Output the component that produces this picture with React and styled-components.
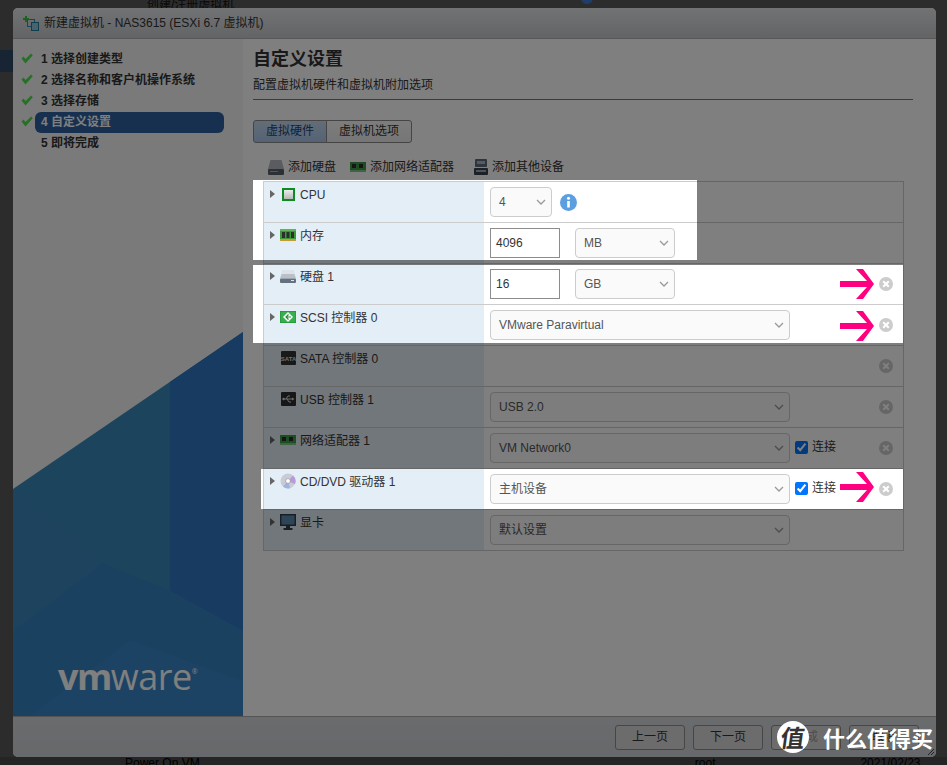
import React from "react";
import styled, { createGlobalStyle } from "styled-components";

const GlobalStyle = createGlobalStyle`
  html, body { margin: 0; padding: 0; background: #585858; overflow: hidden; }
  body { font: 12px/14px "Liberation Sans", "Noto Sans CJK SC", sans-serif; color: #333; }
`;

const Page = styled.div`
  position: relative;
  width: 947px;
  height: 765px;
  overflow: hidden;
  background: #585858;
  display: flex;
  flex-direction: column;
`;

const BackTop = styled.div`
  height: 8px;
  padding-left: 147px;
  display: flex;
  align-items: flex-end;
  gap: 4px;
  line-height: 6px;
  overflow: hidden;
  color: #111;
`;

const BackDot = styled.div`
  width: 12px;
  height: 12px;
  margin: 0 0 4px 343px;
  border-radius: 50%;
  background: #3f7fd0;
  flex: none;
`;

const BackNav = styled.div`
  width: 13px;
  height: 22px;
  margin-top: 42px;
  background: #2c4868;
`;

const BackBottom = styled.div`
  margin-top: auto;
  height: 8px;
  overflow: hidden;
  display: flex;
  background: #4a4a4a;
  color: #000;
  line-height: 12px;
  span:nth-child(1) { margin-left: 125px; width: 571px; }
  span:nth-child(2) { width: 166px; }
`;

const Dialog = styled.div`
  position: absolute;
  left: 13px;
  top: 8px;
  width: 923px;
  height: 749px;
  display: flex;
  flex-direction: column;
  border-radius: 5px;
  overflow: hidden;
  background: #fff;
`;

const Header = styled.div`
  height: 30px;
  flex: none;
  display: flex;
  align-items: center;
  gap: 5px;
  padding-left: 10px;
  border-bottom: 1px solid #b0b0b0;
  background: linear-gradient(#e2e5e9, #c6c9cc);
  color: #333;
`;

const Body = styled.div`
  flex: 1;
  display: flex;
  min-height: 0;
`;

const Side = styled.div`
  width: 230px;
  flex: none;
  display: flex;
  flex-direction: column;
  background: #f5f5f5;
`;

const Steps = styled.div`
  padding-top: 10px;
`;

const Step = styled.div`
  display: flex;
  align-items: center;
  height: 21px;
  padding-left: 8px;
`;

const CheckSlot = styled.div`
  width: 14px;
  height: 14px;
  flex: none;
`;

const StepName = styled.div`
  width: 183px;
  height: 21px;
  padding-left: 6px;
  line-height: 21px;
  font-weight: bold;
  border-radius: 6px;
  color: ${(p) => (p.$active ? "#fff" : "#333")};
  background: ${(p) => (p.$active ? "#2e609e" : "transparent")};
`;

const Art = styled.div`
  position: relative;
  margin-top: auto;
  height: 385px;
  svg { display: block; }
`;

const Logo = styled.div`
  position: absolute;
  left: 45px;
  bottom: 21px;
  color: #fff;
  font: 36px/36px "Open Sans", "Liberation Sans", sans-serif;
  letter-spacing: -0.5px;
  b { font-weight: 700; letter-spacing: -1.5px; }
  sup { font-size: 7px; line-height: 7px; vertical-align: 16px; }
`;

const Main = styled.div`
  flex: 1;
  min-width: 0;
  padding-left: 10px;
  background: #fff;
`;

const Title = styled.h1`
  margin: 9px 0 0;
  font-size: 18px;
  line-height: 22px;
  font-weight: bold;
  color: #333;
`;

const Sub = styled.div`
  margin-top: 8px;
  color: #333;
`;

const Rule = styled.div`
  width: 660px;
  height: 1px;
  margin-top: 7px;
  background: #777;
`;

const Tabs = styled.div`
  display: flex;
  margin-top: 20px;
`;

const Tab = styled.div`
  height: 21px;
  width: ${(p) => p.$w}px;
  box-sizing: content-box;
  line-height: 21px;
  text-align: center;
  border: 1px solid #8a8a8a;
  margin-left: ${(p) => (p.$active ? 0 : -1)}px;
  border-radius: ${(p) => (p.$active ? "3px 0 0 3px" : "0 3px 3px 0")};
  color: ${(p) => (p.$active ? "#24456e" : "#333")};
  background: ${(p) =>
    p.$active ? "linear-gradient(#c8daf0, #a9c6ea)" : "linear-gradient(#fafafa, #ececec)"};
`;

const Toolbar = styled.div`
  display: flex;
  align-items: center;
  height: 16px;
  margin-top: 16px;
  padding-left: 15px;
  gap: 14px;
`;

const ToolItem = styled.div`
  display: flex;
  align-items: center;
  gap: 4px;
  margin-left: ${(p) => p.$shift || 0}px;
`;

const Table = styled.div`
  width: 639px;
  margin: 6px 0 0 10px;
  border: 1px solid #ccc;
  border-bottom: 0;
`;

const Row = styled.div`
  display: flex;
  height: 40px;
  border-bottom: 1px solid #ccc;
`;

const LabelCell = styled.div`
  width: 220px;
  flex: none;
  display: flex;
  align-items: flex-start;
  padding: 6px 0 0 6px;
  box-sizing: border-box;
  background: #e3eef6;
  color: #333;
`;

const Caret = styled.div`
  width: 0;
  height: 0;
  margin: 2px 5px 0 0;
  border-left: 5px solid #666;
  border-top: 4px solid transparent;
  border-bottom: 4px solid transparent;
  visibility: ${(p) => (p.$hidden ? "hidden" : "visible")};
`;

const IconSlot = styled.div`
  width: 16px;
  height: 14px;
  margin: -1px 4px 0 0;
  flex: none;
  display: flex;
  align-items: center;
  justify-content: center;
`;

const ValueCell = styled.div`
  flex: 1;
  display: flex;
  align-items: flex-start;
  padding: 5px 10px 0 6px;
`;

const Select = styled.div`
  width: ${(p) => p.$w}px;
  height: 30px;
  margin-left: ${(p) => p.$ml || 0}px;
  box-sizing: border-box;
  display: flex;
  align-items: center;
  justify-content: space-between;
  padding: 0 5px 0 8px;
  border: 1px solid #ccc;
  border-radius: 4px;
  background: #fafafa;
  color: #555;
`;

const TextBox = styled.div`
  width: 70px;
  height: 30px;
  box-sizing: border-box;
  padding-left: 5px;
  line-height: 28px;
  border: 1px solid #8c8c8c;
  background: #fff;
  color: #333;
`;

const Info = styled.div`
  margin: 7px 0 0 8px;
  height: 17px;
`;

const Connect = styled.label`
  display: flex;
  align-items: center;
  gap: 4px;
  height: 28px;
  margin-left: 5px;
  color: #333;
  input { margin: 0; width: 13px; height: 13px; accent-color: #0075ff; }
`;

const Remove = styled.div`
  margin: 8px 0 0 auto;
  height: 14px;
`;

const Footer = styled.div`
  height: 40px;
  flex: none;
  display: flex;
  align-items: center;
  justify-content: flex-end;
  gap: 8px;
  padding-right: 17px;
  border-top: 1px solid #a8a8a8;
  background: linear-gradient(#d4d7db, #ced1d6);
`;

const Button = styled.div`
  width: 70px;
  height: 25px;
  box-sizing: border-box;
  line-height: 23px;
  text-align: center;
  border: 1px solid #8c8c8c;
  border-radius: 3px;
  background: #d8d8d8;
  color: ${(p) => (p.$muted ? "#999" : "#333")};
`;

const Grip = styled.svg`
  position: absolute;
  right: 1px;
  bottom: 1px;
`;

// the screenshot author's dimming layer, with holes over the rows they marked
const Dim = styled.div`
  position: absolute;
  inset: 0;
  background: rgba(0, 0, 0, 0.5);
  clip-path: path(evenodd, "M0 0H947V765H0Z M253 180H697V260H253Z M253 265H903V343H253Z M261 469H903V509H261Z");
`;

const PinkArrow = styled.svg`
  position: absolute;
  left: 840px;
  top: ${(p) => p.$top}px;
`;

const Watermark = styled.div`
  position: absolute;
  left: 777px;
  top: 721px;
  display: flex;
  align-items: center;
  gap: 14px;
  color: #fff;
  font: 700 22px/32px "Noto Sans CJK SC", sans-serif;
`;

const Seal = styled.div`
  width: 32px;
  height: 32px;
  border-radius: 50%;
  background: #fff;
  color: #333;
  text-align: center;
  font-size: 24px;
  span { display: inline-block; transform: skewX(-8deg); }
`;

const Chevron = () => (
  <svg width="10" height="6" viewBox="0 0 10 6" fill="none" stroke="#999" strokeWidth="1.3">
    <path d="M1 1l4 4 4-4" />
  </svg>
);

const CpuIcon = () => (
  <svg width="13" height="13" viewBox="0 0 13 13">
    <defs>
      <linearGradient id="die" x1="0" y1="0" x2="0" y2="1">
        <stop offset="0" stopColor="#ececec" />
        <stop offset="1" stopColor="#b4b8b4" />
      </linearGradient>
    </defs>
    <rect width="13" height="13" fill="#0d8a22" />
    <rect x="2" y="2" width="9" height="9" fill="url(#die)" />
  </svg>
);

const RamIcon = () => (
  <svg width="16" height="12" viewBox="0 0 16 12">
    <rect width="16" height="10" fill="#3a9a36" />
    <rect width="16" height="2" fill="#5fb656" />
    <rect x="2" y="3" width="3" height="6" fill="#2e2e2e" />
    <rect x="6.5" y="3" width="3" height="6" fill="#2e2e2e" />
    <rect x="11" y="3" width="3" height="6" fill="#2e2e2e" />
    <rect y="10" width="16" height="2" fill="#c89a34" />
  </svg>
);

const NicIcon = () => (
  <svg width="16" height="10" viewBox="0 0 16 10">
    <rect width="16" height="10" fill="#3c9a48" />
    <rect x="2" y="2" width="4" height="4" fill="#2b2b2b" />
    <rect x="9" y="2" width="4" height="4" fill="#2b2b2b" />
    <rect y="8" width="16" height="2" fill="#7fc888" />
  </svg>
);

const HddIcon = () => (
  <svg width="16" height="13" viewBox="0 0 16 13">
    <path d="M3 0h10l3 8.5H0z" fill="#b9c0c9" />
    <path d="M3 0h10l1.5 4h-13z" fill="#dfe3e8" />
    <rect y="8.5" width="16" height="4.5" rx="1" fill="#66717f" />
    <rect x="11" y="10" width="3" height="1" fill="#dfe3e8" />
  </svg>
);

const ScsiIcon = () => (
  <svg width="16" height="12" viewBox="0 0 16 12">
    <rect width="16" height="12" fill="#35b04a" stroke="#1f8a32" />
    <path d="M8 1l5 5-5 5-5-5z" fill="#fff" />
    <path d="M8.5 3.5L6 6l2.5 2.5M6 6h5" fill="none" stroke="#2a8a3c" strokeWidth="1.2" />
  </svg>
);

const SataIcon = () => (
  <svg width="15" height="14" viewBox="0 0 15 14">
    <rect width="15" height="14" rx="1" fill="#333" />
    <text x="7.5" y="9.5" fontSize="6" fontWeight="bold" textAnchor="middle" fill="#ddd" fontFamily="Liberation Sans">SATA</text>
  </svg>
);

const UsbIcon = () => (
  <svg width="15" height="14" viewBox="0 0 15 14">
    <rect width="15" height="14" rx="1" fill="#2e2e2e" />
    <path d="M2 7h10M5 7l2-3h2M6 7l2 3h2" fill="none" stroke="#ddd" strokeWidth="1" />
    <circle cx="2.5" cy="7" r="1.2" fill="#ddd" />
    <path d="M11 5.5L13.5 7 11 8.5z" fill="#ddd" />
  </svg>
);

const CdIcon = () => (
  <svg width="16" height="16" viewBox="0 0 16 16">
    <circle cx="8" cy="8" r="7.5" fill="#c9cbd6" />
    <path d="M8 8L13 2.5A7.5 7.5 0 0 1 15 11z" fill="#b99ad8" />
    <path d="M8 8L3 13.5A7.5 7.5 0 0 0 10 15.2z" fill="#9fb2e0" />
    <circle cx="8" cy="8" r="2.4" fill="#fff" stroke="#888" strokeWidth="0.6" />
  </svg>
);

const MonitorIcon = () => (
  <svg width="16" height="16" viewBox="0 0 16 16">
    <rect width="16" height="12" fill="#2d3c4c" />
    <rect x="1.5" y="1.5" width="13" height="9" fill="#5d8bb0" />
    <rect x="6" y="12" width="4" height="2" fill="#2d3c4c" />
    <rect x="3.5" y="14" width="9" height="2" fill="#2d3c4c" />
  </svg>
);

const DiskTool = () => (
  <svg width="16" height="15" viewBox="0 0 16 15">
    <path d="M2.5 0h11L16 9H0z" fill="#b4b9bf" />
    <rect y="9" width="16" height="6" rx="1" fill="#5a626d" />
    <rect x="2" y="11" width="8" height="1" fill="#a8adb3" />
  </svg>
);

const DeviceTool = () => (
  <svg width="14" height="16" viewBox="0 0 14 16">
    <rect x="1" width="12" height="8" rx="1" fill="#5c6a7a" />
    <rect x="3" y="2" width="8" height="3" fill="#aab6c4" />
    <rect y="9" width="14" height="7" rx="1" fill="#38424e" />
    <rect x="2" y="11" width="10" height="2" fill="#a0a8b0" />
  </svg>
);

const icons = {
  cpu: <CpuIcon />,
  ram: <RamIcon />,
  hdd: <HddIcon />,
  scsi: <ScsiIcon />,
  sata: <SataIcon />,
  usb: <UsbIcon />,
  nic: <NicIcon />,
  cd: <CdIcon />,
  monitor: <MonitorIcon />,
};

const TickIcon = () => (
  <svg width="12" height="11" viewBox="0 0 12 11">
    <path d="M0.5 5.5L2.5 3.5 4.5 6 10 0.5 11.8 2.3 4.5 10.5z" fill="#50e050" />
  </svg>
);

const InfoIcon = () => (
  <svg width="17" height="17" viewBox="0 0 17 17">
    <circle cx="8.5" cy="8.5" r="8.5" fill="#5b9fe0" />
    <circle cx="8.5" cy="4.3" r="1.5" fill="#fff" />
    <rect x="7.2" y="7" width="2.6" height="6.5" fill="#fff" />
  </svg>
);

const RemoveIcon = () => (
  <svg width="14" height="14" viewBox="0 0 14 14">
    <circle cx="7" cy="7" r="7" fill="#ccc" />
    <path d="M4.2 4.2l5.6 5.6M9.8 4.2l-5.6 5.6" stroke="#fff" strokeWidth="2" />
  </svg>
);

const WizardIcon = () => (
  <svg width="16" height="15" viewBox="0 0 16 15" fill="none">
    <rect x="4.5" y="3.5" width="7" height="7" stroke="#2a8fb0" />
    <rect x="8.5" y="6.5" width="7" height="8" fill="#8ec8dc" stroke="#1f7a9c" />
    <path d="M3 0v6M0 3h6" stroke="#3cc03c" strokeWidth="2" />
  </svg>
);

const Arrow = ({ top }) => (
  <PinkArrow $top={top} width="34" height="30" viewBox="0 0 34 30">
    <path d="M0 12h27l-11-12h7l11 15-11 15h-7l11-12H0z" fill="#ff0080" />
  </PinkArrow>
);

const steps = [
  { name: "选择创建类型", done: true },
  { name: "选择名称和客户机操作系统", done: true },
  { name: "选择存储", done: true },
  { name: "自定义设置", done: true, active: true },
  { name: "即将完成" },
];

const rows = [
  { icon: "cpu", label: "CPU", kind: "cpu" },
  { icon: "ram", label: "内存", kind: "size", value: "4096", unit: "MB" },
  { icon: "hdd", label: "硬盘 1", kind: "size", value: "16", unit: "GB", remove: true },
  { icon: "scsi", label: "SCSI 控制器 0", kind: "wide", value: "VMware Paravirtual", remove: true },
  { icon: "sata", label: "SATA 控制器 0", flat: true, remove: true },
  { icon: "usb", label: "USB 控制器 1", flat: true, kind: "wide", value: "USB 2.0", remove: true },
  { icon: "nic", label: "网络适配器 1", kind: "wide", value: "VM Network0", connect: true, remove: true },
  { icon: "cd", label: "CD/DVD 驱动器 1", kind: "wide", value: "主机设备", connect: true, remove: true },
  { icon: "monitor", label: "显卡", kind: "wide", value: "默认设置" },
];

const RowValue = ({ row }) => {
  if (row.kind === "cpu") {
    return (
      <>
        <Select $w={62}>
          4
          <Chevron />
        </Select>
        <Info>
          <InfoIcon />
        </Info>
      </>
    );
  }
  if (row.kind === "size") {
    return (
      <>
        <TextBox>{row.value}</TextBox>
        <Select $w={100} $ml={15}>
          {row.unit}
          <Chevron />
        </Select>
      </>
    );
  }
  if (row.kind === "wide") {
    return (
      <Select $w={300}>
        {row.value}
        <Chevron />
      </Select>
    );
  }
  return null;
};

export default function App() {
  return (
    <Page>
      <GlobalStyle />
      <BackTop>
        创建/注册虚拟机
        <BackDot />
      </BackTop>
      <BackNav />
      <BackBottom>
        <span>Power On VM</span>
        <span>root</span>
        <span>2021/02/23 18:1</span>
      </BackBottom>

      <Dialog>
        <Header>
          <WizardIcon />
          新建虚拟机 - NAS3615 (ESXi 6.7 虚拟机)
        </Header>
        <Body>
          <Side>
            <Steps>
              {steps.map((step, i) => (
                <Step key={step.name}>
                  <CheckSlot>{step.done && <TickIcon />}</CheckSlot>
                  <StepName $active={step.active}>
                    {i + 1} {step.name}
                  </StepName>
                </Step>
              ))}
            </Steps>
            <Art>
              <svg width="230" height="385" viewBox="0 0 230 385">
                <path d="M0 158L230 1V385H0z" fill="#3b88ba" />
                <path d="M157 51L230 1V300L157 260z" fill="#2e76c2" />
                <path d="M0 158L90 232 0 300z" fill="#3a86bc" />
                <path d="M0 300L90 232 157 260 230 300V385H0z" fill="#3782c2" />
                <path d="M17 385L117 309 230 350V385z" fill="#3884c8" />
              </svg>
              <Logo>
                <b>vm</b>ware<sup>®</sup>
              </Logo>
            </Art>
          </Side>
          <Main>
            <Title>自定义设置</Title>
            <Sub>配置虚拟机硬件和虚拟机附加选项</Sub>
            <Rule />
            <Tabs>
              <Tab $active $w={72}>虚拟硬件</Tab>
              <Tab $w={84}>虚拟机选项</Tab>
            </Tabs>
            <Toolbar>
              <ToolItem>
                <DiskTool />
                添加硬盘
              </ToolItem>
              <ToolItem>
                <NicIcon />
                添加网络适配器
              </ToolItem>
              <ToolItem $shift={6}>
                <DeviceTool />
                添加其他设备
              </ToolItem>
            </Toolbar>
            <Table>
              {rows.map((row) => (
                <Row key={row.label}>
                  <LabelCell>
                    <Caret $hidden={row.flat} />
                    <IconSlot>{icons[row.icon]}</IconSlot>
                    {row.label}
                  </LabelCell>
                  <ValueCell>
                    <RowValue row={row} />
                    {row.connect && (
                      <Connect>
                        <input type="checkbox" defaultChecked />
                        连接
                      </Connect>
                    )}
                    {row.remove && (
                      <Remove>
                        <RemoveIcon />
                      </Remove>
                    )}
                  </ValueCell>
                </Row>
              ))}
            </Table>
          </Main>
        </Body>
        <Footer>
          <Button>上一页</Button>
          <Button>下一页</Button>
          <Button $muted>完成</Button>
          <Button>取消</Button>
        </Footer>
        <Grip width="8" height="8" viewBox="0 0 8 8" stroke="#444">
          <path d="M1 7L7 1M4 7l3-3" />
        </Grip>
      </Dialog>

      <Dim />
      <Arrow top={269} />
      <Arrow top={311} />
      <Arrow top={472} />
      <Watermark>
        <Seal>
          <span>值</span>
        </Seal>
        什么值得买
      </Watermark>
    </Page>
  );
}
